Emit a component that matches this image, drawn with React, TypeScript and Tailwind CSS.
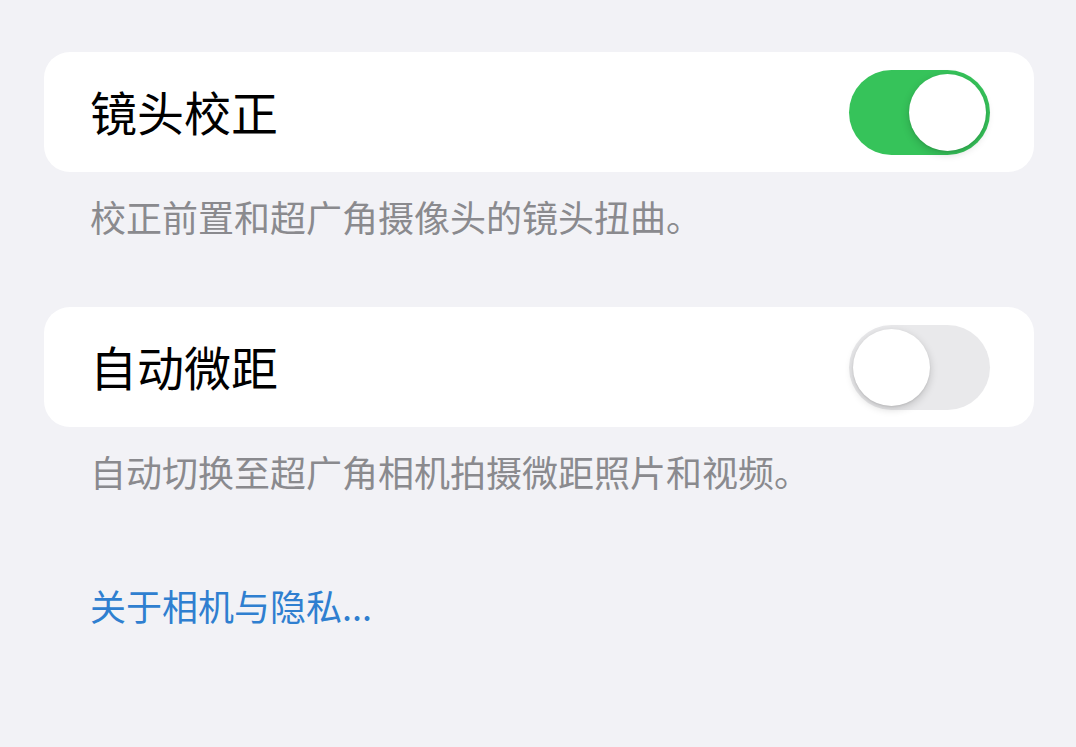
import { FC } from "react";

const Toggle: FC<{ on: boolean }> = ({ on }) => {
  return (
    <div
      className={
        on
          ? "w-[141px] h-[85px] rounded-full bg-[#36c35a] p-[4px] flex justify-end"
          : "w-[141px] h-[85px] rounded-full bg-[#e9e9eb] p-[4px] flex justify-start"
      }
    >
      <div className="w-[77px] h-[77px] rounded-full bg-white shadow-[0_3px_8px_rgba(0,0,0,0.18),0_1px_2px_rgba(0,0,0,0.08)]" />
    </div>
  );
};

const Row: FC<{ title: string; on: boolean }> = ({ title, on }) => {
  return (
    <div className="h-[120px] rounded-[26px] bg-white flex items-center justify-between pl-[46px] pr-[44px]">
      <span className="text-[47px] leading-none text-black -mt-[3px]">{title}</span>
      <Toggle on={on} />
    </div>
  );
};

export default function App() {
  return (
    <div
      className="w-[1076px] h-[747px] bg-[#f2f2f6] pt-[52px] pl-[44px] pr-[42px] overflow-hidden"
      style={{ fontFamily: '"Noto Sans CJK SC", "Noto Sans", sans-serif' }}
    >
      <Row title="镜头校正" on={true} />
      <p className="mt-[24px] pl-[46px] text-[36px] leading-[40px] text-[#8a8a8e]">
        校正前置和超广角摄像头的镜头扭曲。
      </p>

      <div className="mt-[71px]">
        <Row title="自动微距" on={false} />
      </div>
      <p className="mt-[24px] pl-[46px] text-[36px] leading-[40px] text-[#8a8a8e]">
        自动切换至超广角相机拍摄微距照片和视频。
      </p>

      <p className="mt-[94px] pl-[46px] text-[36px] leading-[40px] text-[#2f7fd0]">
        关于相机与隐私...
      </p>
    </div>
  );
}
